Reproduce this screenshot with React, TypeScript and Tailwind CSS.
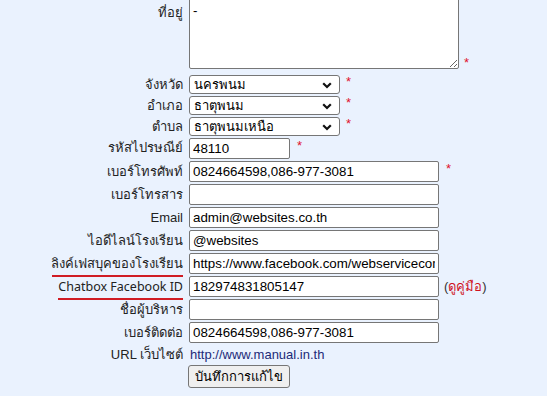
import React from "react";

const F = { fontFamily: 'Tahoma, "Liberation Sans", Arial, sans-serif' };

function Chevron() {
  return (
    <svg width="10" height="7" viewBox="0 0 10 7" className="absolute right-[7px] top-[6px]">
      <path d="M1.2 1.2 L5 5 L8.8 1.2" fill="none" stroke="#111" strokeWidth="2.2" />
    </svg>
  );
}

function Star({ className = "" }: { className?: string }) {
  return <span className={"text-[#e0142c] text-[13px] leading-none " + className}>*</span>;
}

function Row({ label, children, h, mt, labelNode }: { label?: string; children: React.ReactNode; h: string; mt: string; labelNode?: React.ReactNode }) {
  return (
    <div className={"flex items-center " + h + " " + mt}>
      <div className="w-[183px] shrink-0 text-right text-[13px] text-[#222] whitespace-nowrap">{labelNode ?? label}</div>
      <div className="ml-[6px] flex items-center">{children}</div>
    </div>
  );
}

function Sel({ value }: { value: string }) {
  return (
    <div className="relative w-[151px] h-[19px] border border-[#767676] rounded-[3px] bg-white text-[13px] leading-[17px] pl-[4px] text-black">
      {value}
      <Chevron />
    </div>
  );
}

function Inp({ value = "", w = "w-[250px]" }: { value?: string; w?: string }) {
  return (
    <input
      readOnly
      value={value}
      className={w + " h-[21px] border border-[#767676] rounded-[2px] bg-white text-[13.33px] px-[3px] text-black outline-none"}
      style={{ fontFamily: '"Liberation Sans", Arial, sans-serif' }}
    />
  );
}

export default function App() {
  return (
    <div className="w-[547px] h-[396px] bg-[#eaf2fe] overflow-hidden" style={F}>
      <div className="flex flex-col mt-[-2px]">
        <div className="flex">
          <div className="w-[183px] shrink-0 text-right text-[13px] text-[#222] pt-[5px]">ที่อยู่</div>
          <div className="ml-[6px] flex items-end">
            <textarea
              readOnly
              value="-"
              className="w-[270px] h-[71px] border border-[#767676] rounded-[2px] bg-white text-[13.33px] px-[3px] py-[2px] text-black outline-none resize"
              style={{ fontFamily: '"Liberation Sans", Arial, sans-serif' }}
            />
            <Star className="ml-[5px] mb-[0px]" />
          </div>
        </div>
        <Row label="จังหวัด" h="h-[19px]" mt="mt-[6px]">
          <Sel value="นครพนม" />
          <Star className="ml-[6px] -mt-[6px]" />
        </Row>
        <Row label="อำเภอ" h="h-[19px]" mt="mt-[2px]">
          <Sel value="ธาตุพนม" />
          <Star className="ml-[6px] -mt-[6px]" />
        </Row>
        <Row label="ตำบล" h="h-[19px]" mt="mt-[2px]">
          <Sel value="ธาตุพนมเหนือ" />
          <Star className="ml-[6px] -mt-[6px]" />
        </Row>
        <Row label="รหัสไปรษณีย์" h="h-[20px]" mt="mt-[2px]">
          <Inp value="48110" w="w-[101px] h-[20px]" />
          <Star className="ml-[7px] -mt-[6px]" />
        </Row>
        <Row label="เบอร์โทรศัพท์" h="h-[21px]" mt="mt-[3px]">
          <Inp value="0824664598,086-977-3081" />
          <Star className="ml-[7px] -mt-[6px]" />
        </Row>
        <Row label="เบอร์โทรสาร" h="h-[21px]" mt="mt-[2px]">
          <Inp />
        </Row>
        <Row label="Email" h="h-[21px]" mt="mt-[2px]">
          <Inp value="admin@websites.co.th" />
        </Row>
        <Row label="ไอดีไลน์โรงเรียน" h="h-[21px]" mt="mt-[2px]">
          <Inp value="@websites" />
        </Row>
        <Row
          h="h-[21px]"
          mt="mt-[2px]"
          labelNode={
            <span className="relative inline-block">
              ลิงค์เฟสบุคของโรงเรียน
              <span className="absolute left-[1px] right-0 bottom-[-4px] h-[2px] bg-[#d01c24]" />
            </span>
          }
        >
          <Inp value="https://www.facebook.com/webservicecompany" />
        </Row>
        <Row
          h="h-[21px]"
          mt="mt-[2px]"
          labelNode={
            <span className="relative inline-block" style={{ fontFamily: '"Noto Sans", sans-serif' }}>
              <span className="text-[12.5px]">Chatbox Facebook ID</span>
              <span className="absolute left-0 right-0 bottom-[-4px] h-[2px] bg-[#d01c24]" />
            </span>
          }
        >
          <Inp value="182974831805147" />
          <span className="ml-[5px] text-[13px] text-[#333]">
            (<span className="text-[#d0121f]">ดูคู่มือ</span>)
          </span>
        </Row>
        <Row label="ชื่อผู้บริหาร" h="h-[21px]" mt="mt-[2px]">
          <Inp />
        </Row>
        <Row label="เบอร์ติดต่อ" h="h-[21px]" mt="mt-[2px]">
          <Inp value="0824664598,086-977-3081" />
        </Row>
        <Row label="URL เว็บไซต์" h="h-[18px]" mt="mt-[3px]">
          <span className="text-[13px] text-[#1c2a78] ml-[1px]" style={{ fontFamily: '"Liberation Sans", Arial, sans-serif' }}>
            http://www.manual.in.th
          </span>
        </Row>
        <div className="flex mt-[1px]">
          <div className="w-[183px] shrink-0" />
          <button className="ml-[5px] w-[102px] h-[23px] border border-[#767676] rounded-[3px] bg-[#efefef] text-[13px] text-black">
            บันทึกการแก้ไข
          </button>
        </div>
      </div>
    </div>
  );
}
